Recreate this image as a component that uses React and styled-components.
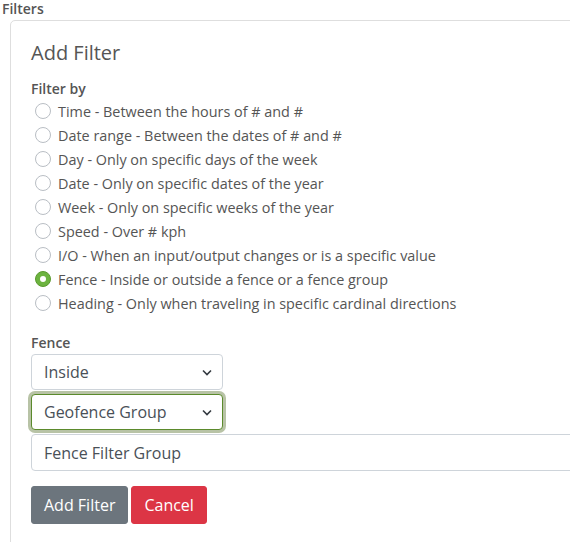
import React from "react";
import styled, { createGlobalStyle } from "styled-components";

const Global = createGlobalStyle`
  html, body { margin: 0; padding: 0; overflow: hidden; background: #fff; }
  body { font-family: "Open Sans", "Liberation Sans", sans-serif; color: #555; }
  * { box-sizing: border-box; }
`;

const Page = styled.div`
  width: 700px;
  padding: 0 0 0 2px;
`;

const PageTitle = styled.div`
  font-size: 14px;
  font-weight: 600;
  line-height: 18px;
  color: #555;
`;

const Card = styled.div`
  margin: 2px 0 0 8px;
  width: 640px;
  min-height: 600px;
  border: 1px solid #dedede;
  border-radius: 5px;
  padding: 20px 20px;
`;

const Heading = styled.h3`
  margin: 0 0 14px;
  font-size: 20px;
  font-weight: 400;
  line-height: 24px;
  color: #555;
`;

const Label = styled.div`
  font-size: 14px;
  font-weight: 600;
  line-height: ${(p) => p.$lh || 21}px;
  color: #555;
  margin-top: ${(p) => p.$mt || 0}px;
  margin-bottom: ${(p) => p.$mb || 0}px;
`;

const RadioList = styled.div`
  display: flex;
  flex-direction: column;
`;

const RadioRow = styled.label`
  display: flex;
  align-items: center;
  height: 24px;
  padding-left: 4px;
  font-size: 14.4px;
  color: #555;
`;

const RadioCircle = styled.span`
  width: 16px;
  height: 16px;
  border-radius: 50%;
  margin-right: 7px;
  flex: none;
  display: flex;
  align-items: center;
  justify-content: center;
  border: 1px solid ${(p) => (p.$checked ? "#5a9a2e" : "#b9bec4")};
  background: ${(p) => (p.$checked ? "#6cb33f" : "#fff")};
  &::after {
    content: "";
    display: ${(p) => (p.$checked ? "block" : "none")};
    width: 6px;
    height: 6px;
    border-radius: 50%;
    background: #fff;
  }
`;

const Stack = styled.div`
  display: flex;
  flex-direction: column;
  gap: 4px;
`;

const SelectBox = styled.div`
  position: relative;
  width: 192px;
  height: 36px;
  border: 1px solid ${(p) => (p.$focus ? "#5b8a2c" : "#ced4da")};
  border-radius: 4px;
  box-shadow: ${(p) => (p.$focus ? "0 0 0 3px #b8c3a6" : "none")};
  padding: 0 12px;
  display: flex;
  align-items: center;
  justify-content: space-between;
  font-size: 16px;
  color: #495057;
  background: #fff;
`;

const Chevron = styled.svg`
  width: 10px;
  height: 7px;
  margin-right: -2px;
`;

const TextInput = styled.div`
  width: 100%;
  height: 37px;
  border: 1px solid #ced4da;
  border-radius: 4px;
  padding: 0 12px;
  display: flex;
  align-items: center;
  font-size: 16px;
  color: #495057;
`;

const Buttons = styled.div`
  display: flex;
  gap: 3px;
  margin-top: 15px;
`;

const Button = styled.button`
  font-family: "Open Sans", "Liberation Sans", sans-serif;
  font-size: 16px;
  line-height: 24px;
  padding: 6px 12px;
  height: 38px;
  border: 1px solid ${(p) => (p.$variant === "danger" ? "#dc3545" : "#6c757d")};
  background: ${(p) => (p.$variant === "danger" ? "#dc3545" : "#6c757d")};
  color: #fff;
  border-radius: 3px;
`;

const options = [
  "Time - Between the hours of # and #",
  "Date range - Between the dates of # and #",
  "Day - Only on specific days of the week",
  "Date - Only on specific dates of the year",
  "Week - Only on specific weeks of the year",
  "Speed - Over # kph",
  "I/O - When an input/output changes or is a specific value",
  "Fence - Inside or outside a fence or a fence group",
  "Heading - Only when traveling in specific cardinal directions",
];

const Caret = () => (
  <Chevron viewBox="0 0 10 7">
    <path d="M1 1.5 L5 5.5 L9 1.5" fill="none" stroke="#343a40" strokeWidth="1.6" />
  </Chevron>
);

export default function App() {
  return (
    <>
      <Global />
      <Page>
        <PageTitle>Filters</PageTitle>
        <Card>
          <Heading>Add Filter</Heading>
          <Label $lh={20}>Filter by</Label>
          <RadioList>
            {options.map((o, i) => (
              <RadioRow key={o}>
                <RadioCircle $checked={i === 7} />
                {o}
              </RadioRow>
            ))}
          </RadioList>
          <Label $mt={17} $mb={1}>Fence</Label>
          <Stack>
            <SelectBox>
              Inside
              <Caret />
            </SelectBox>
            <SelectBox $focus>
              Geofence Group
              <Caret />
            </SelectBox>
            <TextInput>Fence Filter Group</TextInput>
          </Stack>
          <Buttons>
            <Button>Add Filter</Button>
            <Button $variant="danger">Cancel</Button>
          </Buttons>
        </Card>
      </Page>
    </>
  );
}
